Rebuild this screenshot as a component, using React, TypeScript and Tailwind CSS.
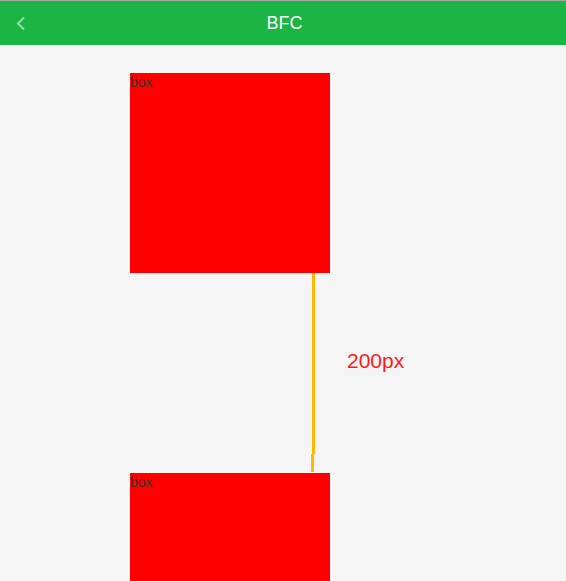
export default function App() {
  return (
    <div className="min-h-[581px] bg-[#f5f5f5] overflow-hidden" style={{ fontFamily: '"Liberation Sans", Arial, sans-serif' }}>
      <div className="h-px bg-[#a6a6a6]" />
      <div className="relative h-[44px] bg-[#1bb543] flex items-center justify-center">
        <svg className="absolute left-[15px] top-[15px]" width="12" height="15" viewBox="0 0 12 15">
          <path d="M9 1.5 L3 7.5 L9 13.5" stroke="#8fe0a5" strokeWidth="2" fill="none" />
        </svg>
        <span className="text-white text-[18px] leading-none ml-[3px]">BFC</span>
      </div>
      <div className="pt-[28px] pl-[130px]">
        <div className="w-[200px] h-[200px] bg-[#ff0000] text-[14px] leading-[18px] text-[#333]">box</div>
        <div className="h-[200px] flex">
          <div className="ml-[182px] flex flex-col">
            <div className="w-[3px] h-[181px] bg-[#ffb900]" />
            <div className="w-[3px] h-[18px] bg-[#ffb900] -ml-px" />
          </div>
          <div className="ml-[32px] mt-[76px] text-[21px] leading-[24px] text-[#ff1a1a]">200px</div>
        </div>
        <div className="w-[200px] h-[200px] bg-[#ff0000] text-[14px] leading-[18px] text-[#333]">box</div>
      </div>
    </div>
  );
}
